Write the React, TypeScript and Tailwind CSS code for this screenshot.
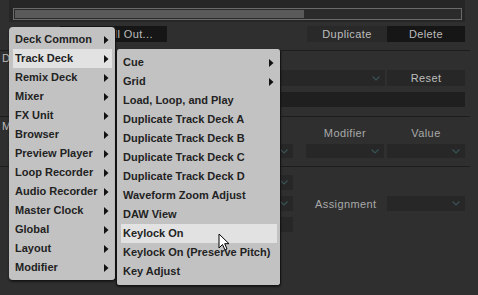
import { ReactNode } from "react";

const mainItems = [
  "Deck Common",
  "Track Deck",
  "Remix Deck",
  "Mixer",
  "FX Unit",
  "Browser",
  "Preview Player",
  "Loop Recorder",
  "Audio Recorder",
  "Master Clock",
  "Global",
  "Layout",
  "Modifier",
];

const subItems: { label: string; sub?: boolean }[] = [
  { label: "Cue", sub: true },
  { label: "Grid", sub: true },
  { label: "Load, Loop, and Play" },
  { label: "Duplicate Track Deck A" },
  { label: "Duplicate Track Deck B" },
  { label: "Duplicate Track Deck C" },
  { label: "Duplicate Track Deck D" },
  { label: "Waveform Zoom Adjust" },
  { label: "DAW View" },
  { label: "Keylock On" },
  { label: "Keylock On (Preserve Pitch)" },
  { label: "Key Adjust" },
];

function Chevron() {
  return (
    <svg width="8" height="5" viewBox="0 0 8 5" className="shrink-0">
      <polyline points="0.5,0.5 4,4 7.5,0.5" fill="none" stroke="#3a5456" strokeWidth="1.1" />
    </svg>
  );
}

function Dropdown({ className }: { className: string }) {
  return (
    <div className={`flex items-center justify-end pr-[5px] bg-[#272727] ${className}`}>
      <Chevron />
    </div>
  );
}

function Btn({ className, children }: { className: string; children: ReactNode }) {
  return (
    <div className={`flex items-center justify-center text-[11px] tracking-[0.4px] text-[#bdbdbd] ${className}`}>
      {children}
    </div>
  );
}

function Arrow() {
  return (
    <svg width="5" height="8" viewBox="0 0 5 8" className="shrink-0">
      <polygon points="0,0 4.5,4 0,8" fill="#111" />
    </svg>
  );
}

function MenuItem({ label, sub, active }: { label: string; sub?: boolean; active?: boolean }) {
  return (
    <div
      className={`flex h-[19px] items-center justify-between pl-[2px] pr-[3px] text-[11px] font-bold leading-[19px] text-[#222] ${
        active ? "bg-[#e2e2e2]" : ""
      }`}
    >
      <span className="whitespace-nowrap">{label}</span>
      {sub && <Arrow />}
    </div>
  );
}

export default function App() {
  return (
    <div className="relative h-[295px] w-[478px] overflow-hidden bg-[#2f2f2f] font-['Liberation_Sans',Arial,sans-serif]">
      {/* top progress panel */}
      <div className="ml-[9px] h-[22px] w-[456px] bg-[#262626] pl-[4px] pt-[8px]">
        <div className="h-[12px] w-[449px] border border-[#6a6a6a] bg-[#2b2b2b] p-px">
          <div className="h-full w-[289px] bg-[#5a5a5a]" />
        </div>
      </div>

      <div className="mt-[4px] flex h-[16px]">
        <Btn className="ml-[60px] w-[107px] !justify-end pr-[14px] bg-[#161616]">All Out...</Btn>
        <Btn className="ml-[140px] w-[80px] bg-[#292929]">Duplicate</Btn>
        <Btn className="w-[78px] bg-[#161616]">Delete</Btn>
      </div>

      <div className="mt-[8px] h-px w-[470px] bg-[#1d1d1d]" />
      <div className="h-[19px] pl-[2px] pt-[1px] text-[11px] leading-[13px] text-[#bdbdbd]">D</div>

      <div className="flex h-[16px]">
        <Dropdown className="ml-[120px] w-[265px]" />
        <Btn className="ml-[2px] w-[78px] bg-[#272727]">Reset</Btn>
      </div>
      <div className="ml-[120px] mt-[6px] h-[15px] w-[345px] bg-[#1f1f1f]" />

      <div className="mt-[9px] h-px w-[470px] bg-[#1d1d1d]" />
      <div className="flex h-[27px] text-[11px] tracking-[0.4px] text-[#a9a9a9]">
        <div className="w-[306px] pl-[2px] pt-[3px] leading-[13px] text-[#bdbdbd]">M</div>
        <div className="w-[78px] pt-[9px] text-center leading-[14px]">Modifier</div>
        <div className="ml-[3px] w-[78px] pt-[9px] text-center leading-[14px]">Value</div>
      </div>

      <div className="flex h-[14px]">
        <Dropdown className="ml-[200px] w-[93px]" />
        <Dropdown className="ml-[13px] w-[78px]" />
        <Dropdown className="ml-[3px] w-[78px]" />
      </div>

      <div className="mt-[8px] h-px w-[470px] bg-[#1d1d1d]" />

      <div className="mt-[8px] flex h-[15px]">
        <Dropdown className="ml-[200px] w-[93px]" />
      </div>
      <div className="mt-[6px] flex h-[15px] items-center">
        <Dropdown className="ml-[200px] h-full w-[93px]" />
        <div className="ml-[22px] w-[72px] pt-[2px] text-[11px] tracking-[0.4px] text-[#a9a9a9]">Assignment</div>
        <Dropdown className="h-full w-[78px]" />
      </div>
      <div className="ml-[200px] mt-[6px] h-[15px] w-[93px] bg-[#272727]" />

      {/* context menu */}
      <div className="absolute left-[9px] top-[27px] h-[254px] w-[107px] rounded-[4px] border-r border-b border-[#151515] bg-[#c2c2c2] pl-[4px] pr-[3px] pt-[3px] shadow-[0_1px_2px_rgba(0,0,0,0.5)]">
        {mainItems.map((m) => (
          <MenuItem key={m} label={m} sub active={m === "Track Deck"} />
        ))}
      </div>

      {/* sub menu */}
      <div className="absolute left-[116px] top-[49px] h-[237px] w-[165px] rounded-[3px] border-l border-r border-b border-[#141414] bg-[#c2c2c2] pl-[4px] pr-[3px] pt-[4px] shadow-[0_1px_2px_rgba(0,0,0,0.5)]">
        {subItems.map((s) => (
          <MenuItem key={s.label} label={s.label} sub={s.sub} active={s.label === "Keylock On"} />
        ))}
      </div>

      {/* mouse pointer */}
      <svg className="absolute left-[218px] top-[233px]" width="13" height="19" viewBox="0 0 13 19">
        <path d="M1 1 L1 15 L4.5 11.5 L7 17 L9 16 L6.7 10.7 L11 10.7 Z" fill="#fff" stroke="#000" strokeWidth="1" strokeLinejoin="round" />
      </svg>
    </div>
  );
}
